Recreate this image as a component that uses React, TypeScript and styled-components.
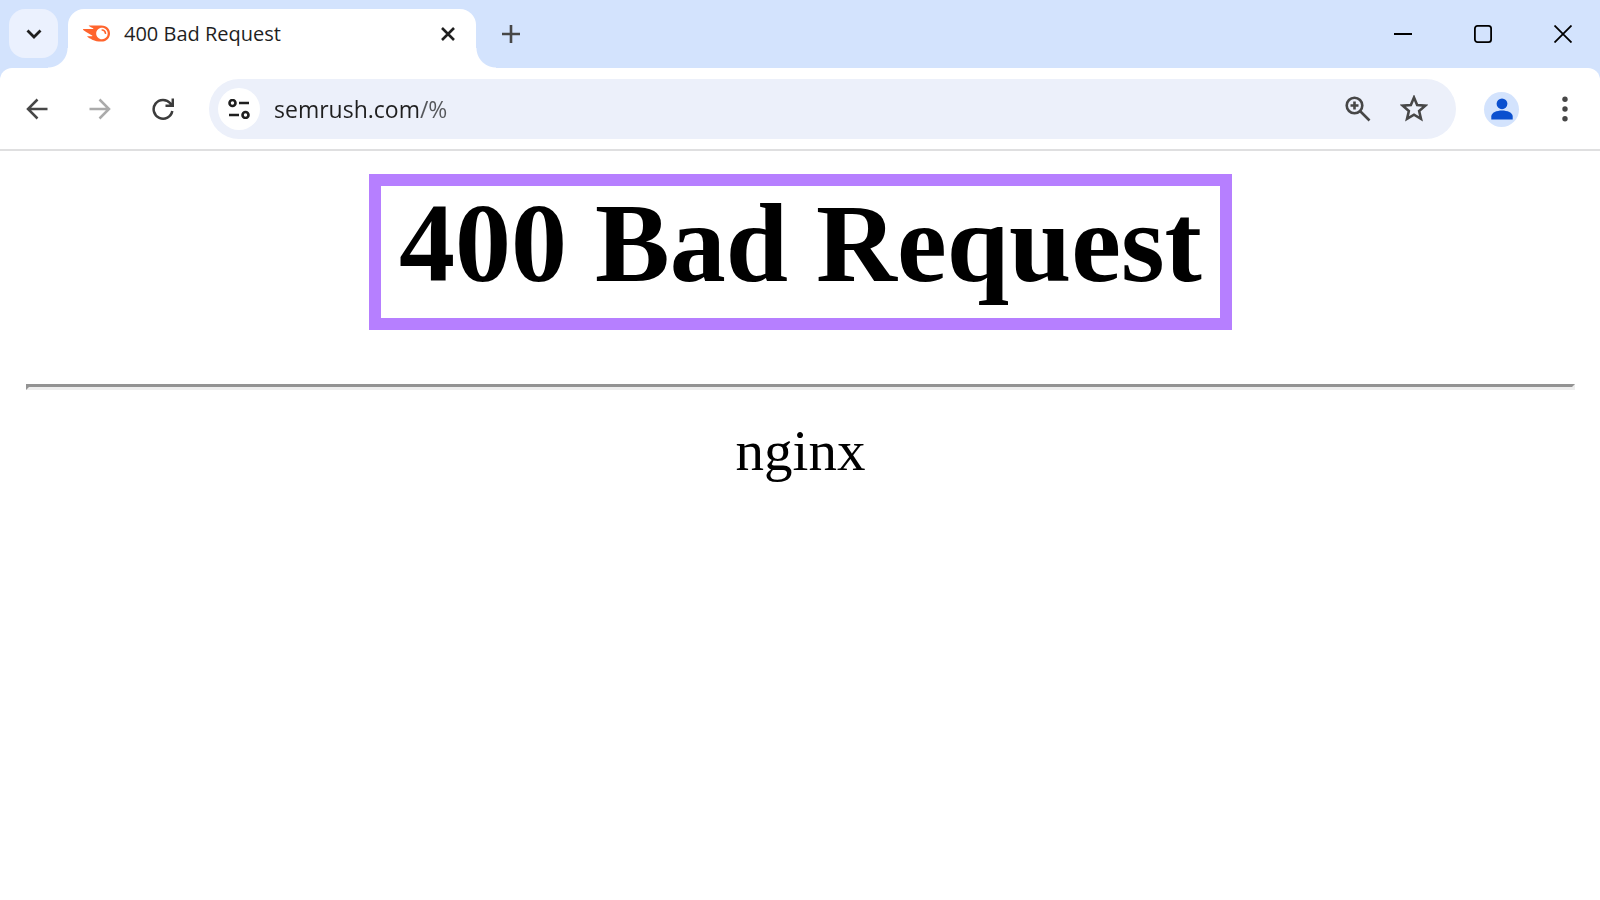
import React from "react";
import styled, { createGlobalStyle } from "styled-components";
import { SiSemrush } from "react-icons/si";

const GlobalStyle = createGlobalStyle`
  *, *::before, *::after { box-sizing: border-box; }
  body { margin: 0; background: #fff; }
  button { margin: 0; padding: 0; border: 0; background: none; font: inherit; color: inherit; }
  svg { display: block; }
`;

const Browser = styled.div`
  display: flex;
  flex-direction: column;
  min-height: 100vh;
  font-family: "Open Sans", "Noto Sans", sans-serif;
  color: #1f1f1f;
`;

const ChromeTop = styled.header`
  background: #d3e3fd;
`;

const TabStrip = styled.div`
  display: flex;
  align-items: flex-start;
  gap: 10px;
  padding: 9px 0 0 9px;
`;

const IconButton = styled.button<{ $w: number; $h: number; $color?: string }>`
  display: flex;
  flex: none;
  align-items: center;
  justify-content: center;
  width: ${(p) => p.$w}px;
  height: ${(p) => p.$h}px;
  color: ${(p) => p.$color ?? "#1f1f1f"};
`;

const SearchTabsButton = styled(IconButton)`
  border-radius: 16px;
  background: #ebf1fe;
`;

const Tab = styled.div`
  position: relative;
  display: flex;
  align-items: center;
  width: 408px;
  height: 59px;
  padding: 0 10px 10px 15px;
  border-radius: 16px 16px 0 0;
  background: #fff;

  &::before,
  &::after {
    content: "";
    position: absolute;
    bottom: 0;
    width: 20px;
    height: 20px;
  }
  &::before {
    right: 100%;
    background: radial-gradient(circle at 0 0, transparent 19px, #fff 20px);
  }
  &::after {
    left: 100%;
    background: radial-gradient(circle at 100% 0, transparent 19px, #fff 20px);
  }
`;

const Favicon = styled.span`
  flex: none;
  color: #ff642d;
`;

const TabTitle = styled.span`
  flex: 1;
  margin-left: 14px;
  font-size: 20px;
  line-height: 28px;
  white-space: nowrap;
`;

const WindowControls = styled.div`
  display: flex;
  gap: 6px;
  margin-left: auto;
`;

const Toolbar = styled.div`
  display: flex;
  align-items: center;
  padding: 11px 13px 10px 15px;
  border-bottom: 2px solid #dfdfe0;
  border-radius: 12px 12px 0 0;
  background: #fff;
`;

const NavButtons = styled.nav`
  display: flex;
  gap: 19px;
  margin-right: 24px;
`;

const AddressBar = styled.form`
  display: flex;
  flex: 1;
  align-items: center;
  height: 60px;
  padding: 0 20px 0 9px;
  border-radius: 30px;
  background: #ecf0fa;
`;

const SiteInfoButton = styled(IconButton)`
  border-radius: 50%;
  background: #fff;
`;

/* The host is drawn darker than the path that follows it. */
const AddressInput = styled.input`
  flex: 1;
  min-width: 0;
  margin-left: 14px;
  padding: 0;
  border: 0;
  outline: 0;
  font: 23px/32px "Open Sans", "Noto Sans", sans-serif;
  color: #1f1f1f;
  background: linear-gradient(90deg, #1f1f1f 145px, #54565a 145px);
  background-clip: text;
  -webkit-text-fill-color: transparent;
`;

const AddressActions = styled.div`
  display: flex;
  gap: 12px;
`;

const ToolbarEnd = styled.div`
  display: flex;
  align-items: center;
  gap: 24px;
  margin-left: 28px;
`;

const ProfileButton = styled(IconButton)`
  border-radius: 50%;
  background: #d3e3fd;
`;

const Page = styled.main`
  padding: 23px 25px 40px 26px;
  font-family: "Liberation Serif", "Times New Roman", serif;
  color: #000;
  text-align: center;
`;

const ErrorTitle = styled.h1`
  width: fit-content;
  margin: 0 auto;
  padding: 0 18px 18px;
  border: 12px solid #b67fff;
  font-size: 112px;
  font-weight: 700;
  line-height: 114px;
`;

const Rule = styled.hr`
  margin: 54px 0 0;
  border: 3px solid;
  border-color: #939393 #eee #eee #939393;
`;

const ServerName = styled.p`
  margin: 29px 0 0;
  font-size: 57px;
  line-height: 64px;
`;

const stroke = { fill: "none", stroke: "currentColor" } as const;

export default function App() {
  return (
    <Browser>
      <GlobalStyle />
      <ChromeTop>
        <TabStrip>
          <SearchTabsButton type="button" $w={49} $h={49} aria-label="Search tabs">
            <svg width="16" height="10" viewBox="0 0 16 10" {...stroke} strokeWidth="2.8">
              <path d="M1.5 1.5 8 8l6.500-6.500" />
            </svg>
          </SearchTabsButton>
          <Tab>
            <Favicon>
              <SiSemrush size={27} />
            </Favicon>
            <TabTitle>400 Bad Request</TabTitle>
            <IconButton type="button" $w={37} $h={36} aria-label="Close tab">
              <svg width="14" height="14" viewBox="0 0 14 14" {...stroke} strokeWidth="2.6">
                <path d="M1 1l12 12M13 1 1 13" />
              </svg>
            </IconButton>
          </Tab>
          <IconButton type="button" $w={49} $h={49} $color="#474747" aria-label="New tab">
            <svg width="18" height="18" viewBox="0 0 18 18" {...stroke} strokeWidth="2.6">
              <path d="M9 0v18M0 9h18" />
            </svg>
          </IconButton>
          <WindowControls>
            <IconButton type="button" $w={74} $h={49} $color="#000" aria-label="Minimize">
              <svg width="18" height="18" viewBox="0 0 18 18" {...stroke} strokeWidth="2">
                <path d="M0 9h18" />
              </svg>
            </IconButton>
            <IconButton type="button" $w={74} $h={49} $color="#000" aria-label="Maximize">
              <svg width="18" height="18" viewBox="0 0 18 18" {...stroke} strokeWidth="1.8">
                <rect x="0.900" y="0.900" width="16.200" height="16.200" rx="2.600" />
              </svg>
            </IconButton>
            <IconButton type="button" $w={74} $h={49} $color="#000" aria-label="Close window">
              <svg width="18" height="18" viewBox="0 0 18 18" {...stroke} strokeWidth="1.8">
                <path d="M.5.5l17 17M17.500.5l-17 17" />
              </svg>
            </IconButton>
          </WindowControls>
        </TabStrip>
        <Toolbar>
          <NavButtons aria-label="History">
            <IconButton type="button" $w={44} $h={44} $color="#474747" aria-label="Back">
              <svg width="22" height="22" viewBox="0 0 22 22" {...stroke} strokeWidth="2.5">
                <path d="M21.500 11H2.500M11.500 1.500 2 11l9.500 9.500" />
              </svg>
            </IconButton>
            <IconButton type="button" $w={44} $h={44} $color="#ababab" aria-label="Forward">
              <svg width="22" height="22" viewBox="0 0 22 22" {...stroke} strokeWidth="2.5">
                <path d="M.5 11h19M10.500 1.500 20 11l-9.500 9.500" />
              </svg>
            </IconButton>
            <IconButton type="button" $w={44} $h={44} $color="#3c3c3c" aria-label="Reload">
              <svg width="22" height="22" viewBox="0 0 22 22" {...stroke} strokeWidth="2.5">
                <path d="M20.300 13A9.400 9.400 0 1 1 18.300 5.300L20.500 7.500M20.800.5v7.300h-7.300" />
              </svg>
            </IconButton>
          </NavButtons>
          <AddressBar onSubmit={(e) => e.preventDefault()}>
            <SiteInfoButton type="button" $w={42} $h={42} aria-label="View site information">
              <svg width="22" height="20" viewBox="0 0 22 20" {...stroke} strokeWidth="2.6">
                <circle cx="4.500" cy="4" r="3" />
                <path d="M11 4h10M1 16h10" />
                <circle cx="17.500" cy="16" r="3" />
              </svg>
            </SiteInfoButton>
            <AddressInput type="text" aria-label="Address" defaultValue="semrush.com/%" />
            <AddressActions>
              <IconButton type="button" $w={44} $h={44} $color="#474747" aria-label="Zoom">
                <svg width="26" height="26" viewBox="0 0 26 26" {...stroke} strokeWidth="2.6">
                  <circle cx="9.500" cy="9.500" r="7.800" />
                  <path d="M15 15l9.500 9.500M9.500 5.500v8M5.500 9.500h8" />
                </svg>
              </IconButton>
              <IconButton type="button" $w={44} $h={44} $color="#474747" aria-label="Bookmark this page">
                <svg width="28" height="28" viewBox="2 2.500 24 24" {...stroke} strokeWidth="2.200">
                  <path d="M14 4.600l2.700 6.400 7 .6-5.300 4.600 1.600 6.800L14 19.400 8 23l1.600-6.800-5.300-4.600 7-.6z" />
                </svg>
              </IconButton>
            </AddressActions>
          </AddressBar>
          <ToolbarEnd>
            <ProfileButton type="button" $w={35} $h={35} $color="#0b50cf" aria-label="Profile">
              <svg width="22" height="22" viewBox="0 0 22 22" fill="currentColor">
                <circle cx="11" cy="5.800" r="5.400" />
                <path d="M0.300 21.500v-3c0-4 5.500-6 10.700-6s10.700 2 10.700 6v3z" />
              </svg>
            </ProfileButton>
            <IconButton type="button" $w={44} $h={44} $color="#474747" aria-label="Menu">
              <svg width="6" height="26" viewBox="0 0 6 26" fill="currentColor">
                <circle cx="3" cy="3.200" r="2.700" />
                <circle cx="3" cy="13" r="2.700" />
                <circle cx="3" cy="22.800" r="2.700" />
              </svg>
            </IconButton>
          </ToolbarEnd>
        </Toolbar>
      </ChromeTop>
      <Page>
        <ErrorTitle>400 Bad Request</ErrorTitle>
        <Rule />
        <ServerName>nginx</ServerName>
      </Page>
    </Browser>
  );
}
